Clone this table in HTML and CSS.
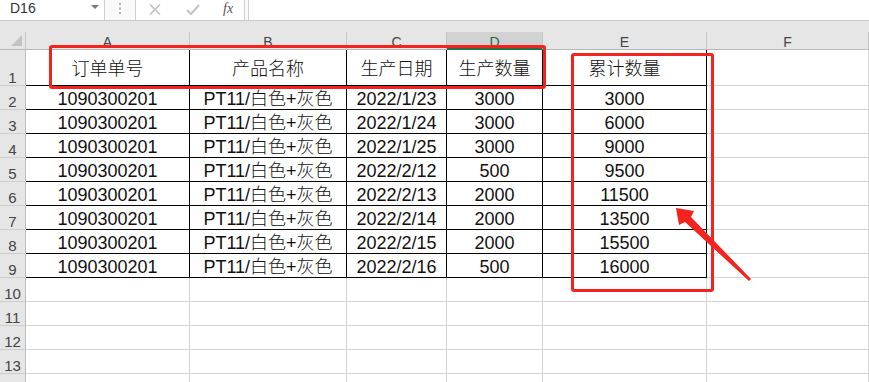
FILE: index.html
```html
<!DOCTYPE html>
<html lang="zh-CN">
<head>
    <meta charset="UTF-8">
    <meta name="viewport" content="width=device-width, initial-scale=1.0">
    <title>累计数量</title>
    <link rel="stylesheet" href="styles.css">
</head>
<body>
<div class="page">
    <!-- formula bar: name box, grip, buttons, input -->
    <div class="fbar">
        <div class="namebox">
            <span>D16</span>
            <svg class="drop" width="8" height="4" viewBox="0 0 8 4"><polygon points="0,0 8,0 4,4" fill="#7a7a7a"/></svg>
        </div>
        <div class="grip">
            <svg width="3" height="11" viewBox="0 0 3 11"><rect x="0" y="0" width="2" height="2" fill="#b5b5b5"/><rect x="0" y="4.5" width="2" height="2" fill="#b5b5b5"/><rect x="0" y="9" width="2" height="2" fill="#b5b5b5"/></svg>
        </div>
        <div class="fnbox">
            <svg class="ico" width="12" height="11" viewBox="0 0 12 11"><path d="M1 0.5 L11 10.5 M11 0.5 L1 10.5" stroke="#c2c2c2" stroke-width="1.6" fill="none"/></svg>
            <svg class="ico" width="14" height="11" viewBox="0 0 14 11"><path d="M1 6 L5 10 L13 1" stroke="#c2c2c2" stroke-width="2" fill="none"/></svg>
            <span class="fx">fx</span>
        </div>
        <div class="finput"></div>
    </div>
    <div class="gap"></div>

    <!-- the grid -->
    <div class="grid">
        <div class="hd corner"><svg width="11" height="11" viewBox="0 0 11 11"><polygon points="11,0 11,11 0,11" fill="#c3c3c3"/></svg></div>
        <div class="hd">A</div>
        <div class="hd">B</div>
        <div class="hd">C</div>
        <div class="hd sel">D</div>
        <div class="hd">E</div>
        <div class="hd">F</div>

        <div class="rh">1</div>
        <div class="c t">订单单号</div>
        <div class="c t">产品名称</div>
        <div class="c t">生产日期</div>
        <div class="c t">生产数量</div>
        <div class="c t">累计数量</div>
        <div class="c"></div>

        <div class="rh">2</div>
        <div class="c t">1090300201</div>
        <div class="c t">PT11/白色+灰色</div>
        <div class="c t">2022/1/23</div>
        <div class="c t">3000</div>
        <div class="c t">3000</div>
        <div class="c"></div>

        <div class="rh">3</div>
        <div class="c t">1090300201</div>
        <div class="c t">PT11/白色+灰色</div>
        <div class="c t">2022/1/24</div>
        <div class="c t">3000</div>
        <div class="c t">6000</div>
        <div class="c"></div>

        <div class="rh">4</div>
        <div class="c t">1090300201</div>
        <div class="c t">PT11/白色+灰色</div>
        <div class="c t">2022/1/25</div>
        <div class="c t">3000</div>
        <div class="c t">9000</div>
        <div class="c"></div>

        <div class="rh">5</div>
        <div class="c t">1090300201</div>
        <div class="c t">PT11/白色+灰色</div>
        <div class="c t">2022/2/12</div>
        <div class="c t">500</div>
        <div class="c t">9500</div>
        <div class="c"></div>

        <div class="rh">6</div>
        <div class="c t">1090300201</div>
        <div class="c t">PT11/白色+灰色</div>
        <div class="c t">2022/2/13</div>
        <div class="c t">2000</div>
        <div class="c t">11500</div>
        <div class="c"></div>

        <div class="rh">7</div>
        <div class="c t">1090300201</div>
        <div class="c t">PT11/白色+灰色</div>
        <div class="c t">2022/2/14</div>
        <div class="c t">2000</div>
        <div class="c t">13500</div>
        <div class="c"></div>

        <div class="rh">8</div>
        <div class="c t">1090300201</div>
        <div class="c t">PT11/白色+灰色</div>
        <div class="c t">2022/2/15</div>
        <div class="c t">2000</div>
        <div class="c t">15500</div>
        <div class="c"></div>

        <div class="rh">9</div>
        <div class="c t">1090300201</div>
        <div class="c t">PT11/白色+灰色</div>
        <div class="c t">2022/2/16</div>
        <div class="c t">500</div>
        <div class="c t">16000</div>
        <div class="c"></div>

        <div class="rh">10</div>
        <div class="c"></div><div class="c"></div><div class="c"></div><div class="c"></div><div class="c"></div><div class="c"></div>
        <div class="rh">11</div>
        <div class="c"></div><div class="c"></div><div class="c"></div><div class="c"></div><div class="c"></div><div class="c"></div>
        <div class="rh">12</div>
        <div class="c"></div><div class="c"></div><div class="c"></div><div class="c"></div><div class="c"></div><div class="c"></div>
        <div class="rh">13</div>
        <div class="c"></div><div class="c"></div><div class="c"></div><div class="c"></div><div class="c"></div><div class="c"></div>
        <!-- next row only peeks in at the bottom edge -->
        <div class="rh"></div>
        <div class="c"></div><div class="c"></div><div class="c"></div><div class="c"></div><div class="c"></div><div class="c"></div>
    </div>

    <!-- red marks drawn over the sheet -->
    <div class="mark mark-head"></div>
    <div class="mark mark-total"></div>
    <svg class="arrow" width="869" height="382" viewBox="0 0 869 382">
        <polygon points="676,208 694,211 691,217 751,279 749,281 685,222 679,225" fill="#f4231d"/>
    </svg>
</div>
</body>
</html>
```

FILE: styles.css
```css
*{
    margin: 0;
    padding: 0;
    box-sizing: border-box;
}
body{
    background: #fff;
    font-family: "Liberation Sans", "Noto Sans CJK SC", sans-serif;
    overflow: hidden;
}
.page{
    position: relative;
    width: 869px;
    height: 382px;
    overflow: hidden;
}

/* formula bar */
.fbar{
    display: flex;
    height: 21px;
    background: #fafafa;
    border-bottom: 1px solid #c9c9c9;
}
.namebox{
    width: 105px;
    display: flex;
    justify-content: space-between;
    padding: 0 5px 0 10px;
    background: #fff;
    border-right: 1px solid #cfcfcf;
    font-size: 14px;
    line-height: 16px;
    color: #333;
}
.namebox .drop{
    margin-top: 5px;
}
.grip{
    width: 30px;
    display: flex;
    justify-content: center;
    padding-top: 3px;
}
.fnbox{
    width: 110px;
    display: flex;
    align-items: flex-start;
    gap: 25px;
    padding: 3px 0 0 13px;
    background: #fff;
    border-left: 1px solid #cfcfcf;
    border-right: 1px solid #cfcfcf;
}
.fnbox .ico{
    margin-top: 1px;
}
.fx{
    font-family: "Liberation Serif", serif;
    font-style: italic;
    font-size: 14px;
    line-height: 12px;
    color: #555;
    margin-left: -2px;
}
.finput{
    flex: 1;
    margin-left: 3px;
    background: #fff;
    border-left: 1px solid #cfcfcf;
}
.gap{
    height: 11px;
    background: #e6e6e6;
}

/* sheet grid */
.grid{
    display: grid;
    grid-template-columns: 26px 164px 157px 100px 96px 164px 162px;
    grid-template-rows: 18px 36px repeat(13, 24px);
}
.hd{
    background: #e6e6e6;
    border-right: 1px solid #c4c4c4;
    border-bottom: 1px solid #b9b9b9;
    font-size: 14px;
    line-height: 18px;
    padding-top: 1px;
    text-align: center;
    color: #444;
}
.hd.corner{
    display: flex;
    justify-content: flex-end;
    align-items: flex-end;
    padding: 0 3px 3px 0;
}
.hd.sel{
    background: #d2d2d2;
    border-bottom: 2px solid #217346;
    color: #1f6a40;
}
.rh{
    background: #e6e6e6;
    border-right: 1px solid #bdbdbd;
    border-bottom: 1px solid #cdcdcd;
    display: flex;
    justify-content: center;
    align-items: flex-end;
    font-size: 15px;
    line-height: 15px;
    color: #444;
}
.c{
    border-right: 1px solid #d4d4d4;
    border-bottom: 1px solid #d4d4d4;
    display: flex;
    justify-content: center;
    align-items: center;
    padding-top: 2px;
    font-size: 18px;
    font-weight: 300;
    line-height: 20px;
    color: #111;
    white-space: nowrap;
}
.c.t{
    border-right-color: #000;
    border-bottom-color: #000;
}

/* red highlight boxes and pointer */
.mark{
    position: absolute;
    border: 3px solid #f4231d;
    border-radius: 3px;
}
.mark-head{
    left: 49px;
    top: 45px;
    width: 497px;
    height: 44px;
}
.mark-total{
    left: 571px;
    top: 53px;
    width: 143px;
    height: 239px;
}
.arrow{
    position: absolute;
    left: 0;
    top: 0;
}
```
